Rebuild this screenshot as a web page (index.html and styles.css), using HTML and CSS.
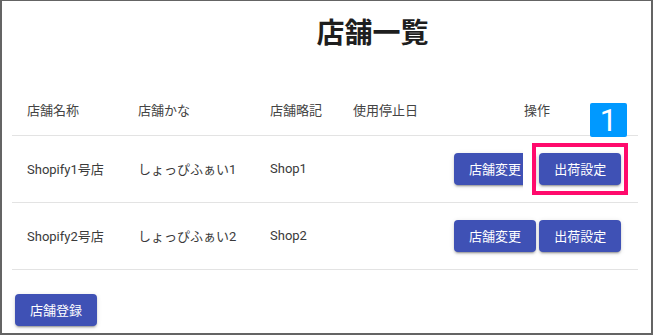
FILE: index.html
```html
<!DOCTYPE html>
<html lang="ja">
<head>
    <meta charset="UTF-8">
    <meta name="viewport" content="width=device-width, initial-scale=1.0">
    <title>店舗一覧</title>
    <link rel="stylesheet" href="styles.css">
</head>
<body>
    <div class="page">
        <h1 class="title">店舗一覧</h1>
        <table class="shop-table">
            <colgroup>
                <col class="col-name">
                <col class="col-kana">
                <col class="col-short">
                <col class="col-stop">
                <col class="col-action">
            </colgroup>
            <thead>
                <tr>
                    <th>店舗名称</th>
                    <th>店舗かな</th>
                    <th>店舗略記</th>
                    <th>使用停止日</th>
                    <th class="action">操作</th>
                </tr>
            </thead>
            <tbody>
                <tr>
                    <td>Shopify1号店</td>
                    <td>しょっぴふぁい1</td>
                    <td>Shop1</td>
                    <td></td>
                    <td class="action">
                        <button class="btn">店舗変更</button>
                        <button class="btn">出荷設定</button>
                    </td>
                </tr>
                <tr>
                    <td>Shopify2号店</td>
                    <td>しょっぴふぁい2</td>
                    <td>Shop2</td>
                    <td></td>
                    <td class="action">
                        <button class="btn">店舗変更</button>
                        <button class="btn">出荷設定</button>
                    </td>
                </tr>
            </tbody>
        </table>
        <button class="btn btn-add">店舗登録</button>

        <!-- annotation -->
        <div class="callout"></div>
        <div class="badge">1</div>
    </div>
</body>
</html>
```

FILE: styles.css
```css
*{
    box-sizing: border-box;
}
body{
    margin: 0;
    background-color: #fff;
    font-family: Roboto, "Noto Sans CJK JP", sans-serif;
    color: #3a3a3a;
}
.page{
    position: relative;
    width: 653px;
    height: 335px;
    border: 2px solid #646464;
    border-top-width: 1px;
    overflow: hidden;
}
.title{
    margin: 12px 0 0 92px;
    font-family: "Noto Sans CJK JP", sans-serif;
    font-size: 28px;
    font-weight: 700;
    line-height: 36px;
    text-align: center;
    color: #1e1e1e;
}
.shop-table{
    margin: 36px 0 0 10px;
    width: 626px;
    table-layout: fixed;
    border-collapse: collapse;
    font-size: 13px;
}
.col-name{ width: 111px; }
.col-kana{ width: 132px; }
.col-short{ width: 83px; }
.col-stop{ width: 102px; }
.col-action{ width: 198px; }

.shop-table th,
.shop-table td{
    padding: 0 0 0 15px;
    text-align: left;
    font-weight: 400;
    white-space: nowrap;
    border-bottom: 1px solid #e3e3e3;
}
.shop-table th{
    height: 50px;
    color: #444;
}
.shop-table td{
    height: 67px;
}
.shop-table .action{
    padding: 0 18px 0 14px;
    text-align: center;
}
.btn{
    height: 32px;
    padding: 0 15px;
    border: none;
    border-radius: 4px;
    background-color: #3f51b5;
    color: #fff;
    font-family: "Noto Sans CJK JP", sans-serif;
    font-size: 13px;
    box-shadow: 0 3px 1px -2px rgba(0,0,0,.2), 0 2px 2px 0 rgba(0,0,0,.14), 0 1px 5px 0 rgba(0,0,0,.12);
    cursor: pointer;
}
.btn-add{
    display: block;
    margin: 24px 0 0 13px;
}
.callout{
    position: absolute;
    left: 530px;
    top: 142px;
    width: 96px;
    height: 52px;
    border: 4px solid #ff0a6c;
    box-shadow: -9px 0 0 0 #fff;
}
.badge{
    position: absolute;
    left: 588px;
    top: 102px;
    width: 37px;
    height: 34px;
    border-radius: 2px;
    background-color: #0099ff;
    color: #fff;
    font-family: Roboto, sans-serif;
    font-size: 31px;
    font-weight: 400;
    line-height: 35px;
    text-align: center;
}
```
